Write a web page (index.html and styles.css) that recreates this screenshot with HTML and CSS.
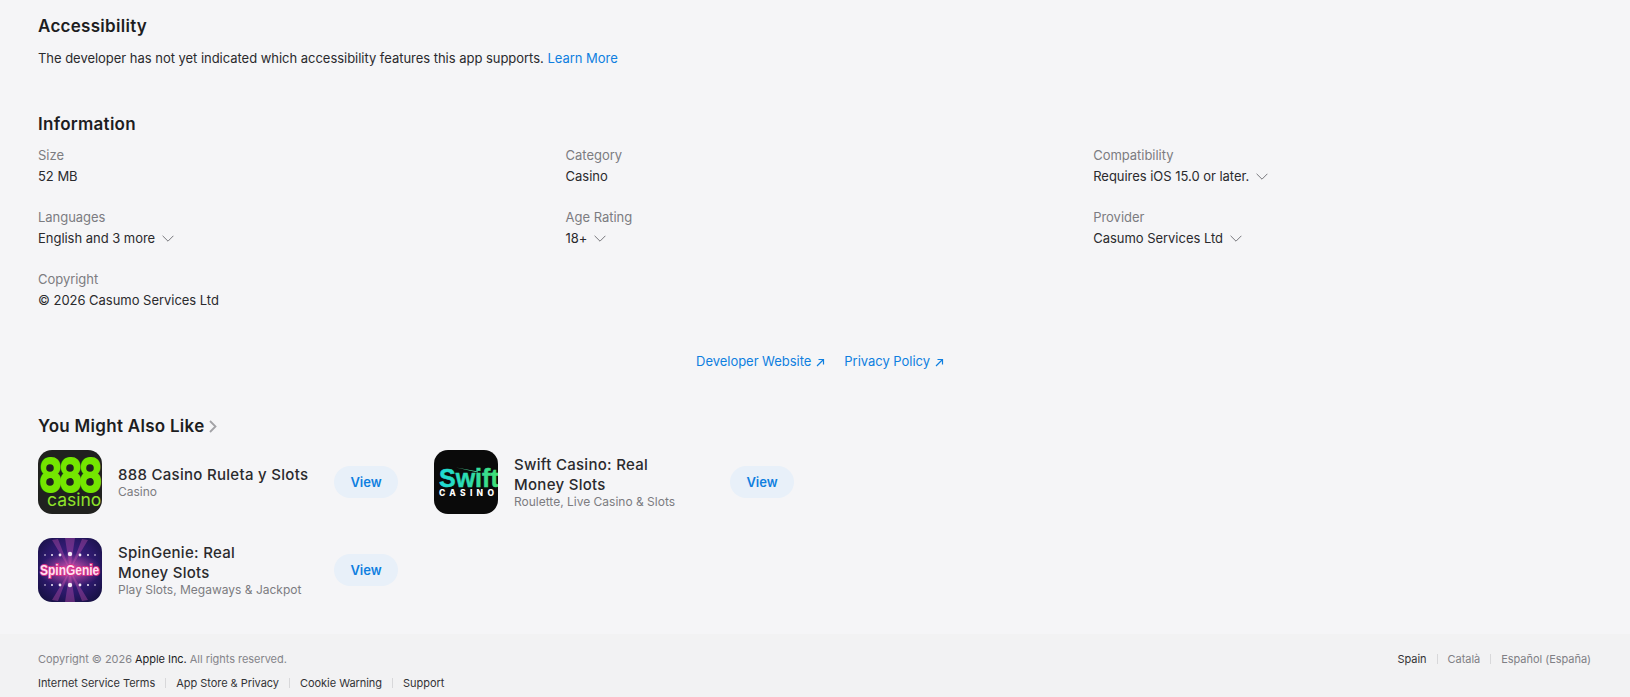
FILE: index.html
```html
<!DOCTYPE html>
<html lang="en">
<head>
<meta charset="utf-8">
<title>App details</title>
<link rel="stylesheet" href="styles.css">
</head>
<body>
<main class="main">
  <section class="access">
    <h2 class="heading">Accessibility</h2>
    <p class="para">The developer has not yet indicated which accessibility features this app supports. <a class="link" href="#">Learn More</a></p>
  </section>
  <section class="info">
    <h2 class="heading">Information</h2>
    <dl class="grid">
      <div class="cell"><dt class="label">Size</dt><dd class="value">52 MB</dd></div>
      <div class="cell"><dt class="label">Category</dt><dd class="value">Casino</dd></div>
      <div class="cell"><dt class="label">Compatibility</dt><dd class="value">Requires iOS 15.0 or later.<svg class="chev" viewBox="0 0 12 7"><path d="M.6.8 6 6.2 11.400.8"/></svg></dd></div>
      <div class="cell"><dt class="label">Languages</dt><dd class="value">English and 3 more<svg class="chev" viewBox="0 0 12 7"><path d="M.6.8 6 6.2 11.400.8"/></svg></dd></div>
      <div class="cell"><dt class="label">Age Rating</dt><dd class="value">18+<svg class="chev" viewBox="0 0 12 7"><path d="M.6.8 6 6.2 11.400.8"/></svg></dd></div>
      <div class="cell"><dt class="label">Provider</dt><dd class="value">Casumo Services Ltd<svg class="chev" viewBox="0 0 12 7"><path d="M.6.8 6 6.2 11.400.8"/></svg></dd></div>
      <div class="cell"><dt class="label">Copyright</dt><dd class="value">© 2026 Casumo Services Ltd</dd></div>
    </dl>
  </section>
  <nav class="extlinks">
    <a class="link" href="#">Developer Website<svg class="arrow" viewBox="0 0 9 9"><path d="M1 8 7.500 1.500M2.500 1.500h5v5"/></svg></a>
    <a class="link" href="#">Privacy Policy<svg class="arrow" viewBox="0 0 9 9"><path d="M1 8 7.500 1.500M2.500 1.500h5v5"/></svg></a>
  </nav>
  <section class="also">
    <h2 class="heading heading-row">You Might Also Like<svg class="more" viewBox="0 0 8 13"><path d="M1 1l5.500 5.500L1 12"/></svg></h2>
    <div class="apps">
      <article class="app">
        <svg class="icon" viewBox="0 0 64 64">
          <rect width="64" height="64" rx="14" fill="#20211f"/>
          <text class="t888" transform="translate(2.500 41) scale(1 1.280)">888</text>
          <g fill="#20211f">
            <circle cx="12" cy="18" r="3.800"/><circle cx="32" cy="18" r="3.800"/><circle cx="52" cy="18" r="3.800"/>
            <circle cx="12" cy="32" r="3.800"/><circle cx="32" cy="32" r="3.800"/><circle cx="52" cy="32" r="3.800"/>
          </g>
          <text class="tcasino" x="9" y="56">casino</text>
        </svg>
        <div class="meta"><h3 class="name">888 Casino Ruleta y Slots</h3><p class="sub">Casino</p></div>
        <a class="view" href="#">View</a>
      </article>
      <article class="app">
        <svg class="icon" viewBox="0 0 64 64">
          <defs><linearGradient id="sw" x1="0" x2="1" y1="0" y2="0"><stop offset="0" stop-color="#1fdcd8"/><stop offset=".55" stop-color="#2fdca8"/><stop offset="1" stop-color="#43e070"/></linearGradient></defs>
          <rect width="64" height="64" rx="14" fill="#0a0a0a"/>
          <text class="tswift" x="5" y="36.500" fill="url(#sw)" stroke="url(#sw)">Swift</text>
          <path d="M22 17.500 44 21.500 44 22.500z" fill="#4fe0a0"/>
          <text class="tcas" x="5" y="45.500" textLength="55">CASINO</text>
        </svg>
        <div class="meta"><h3 class="name wrap">Swift Casino: Real Money Slots</h3><p class="sub">Roulette, Live Casino &amp; Slots</p></div>
        <a class="view" href="#">View</a>
      </article>
      <article class="app">
        <svg class="icon" viewBox="0 0 64 64">
          <defs>
            <radialGradient id="sg" cx=".5" cy=".45" r=".7"><stop offset="0" stop-color="#4a2490"/><stop offset=".6" stop-color="#2a1868"/><stop offset="1" stop-color="#120f3c"/></radialGradient>
            <radialGradient id="sr" cx=".5" cy=".5" r=".5"><stop offset="0" stop-color="#ff5fb0" stop-opacity=".85"/><stop offset="1" stop-color="#d050a0" stop-opacity="0"/></radialGradient>
          </defs>
          <rect width="64" height="64" rx="14" fill="url(#sg)"/>
          <path d="M27 0h10l-5 32zM14 2l6-1 12 31zM44 1l6 1-18 30zM27 64h10l-5-32zM14 62l6 1 12-31zM44 63l6-1-18-30z" fill="#c050b0" opacity=".4"/>
          <ellipse cx="32" cy="32" rx="32" ry="17" fill="url(#sr)"/>
          <g fill="#f6ecf8"><circle cx="7" cy="17" r=".8"/><circle cx="14" cy="17" r="1"/><circle cx="22" cy="17" r="1.400"/><circle cx="32" cy="16" r="2.200"/><circle cx="42" cy="17" r="1.400"/><circle cx="50" cy="17" r="1"/><circle cx="57" cy="17" r=".8"/><circle cx="7" cy="47" r=".8"/><circle cx="14" cy="47" r="1"/><circle cx="22" cy="47" r="1.400"/><circle cx="32" cy="47" r="2.200"/><circle cx="42" cy="47" r="1.400"/><circle cx="50" cy="47" r="1"/><circle cx="57" cy="47" r=".8"/></g>
          <text class="tspin" transform="translate(2 37) scale(1 1.180)">SpinGenie</text>
        </svg>
        <div class="meta"><h3 class="name wrap">SpinGenie: Real Money Slots</h3><p class="sub">Play Slots, Megaways &amp; Jackpot</p></div>
        <a class="view" href="#">View</a>
      </article>
    </div>
  </section>
</main>
<footer class="footer">
  <div class="foot-col">
    <p class="copy">Copyright © 2026 <span class="dark">Apple Inc.</span> All rights reserved.</p>
    <ul class="foot-links">
      <li class="foot-item"><a class="foot-a" href="#">Internet Service Terms</a></li>
      <li class="foot-item"><a class="foot-a" href="#">App Store &amp; Privacy</a></li>
      <li class="foot-item"><a class="foot-a" href="#">Cookie Warning</a></li>
      <li class="foot-item"><a class="foot-a" href="#">Support</a></li>
    </ul>
  </div>
  <ul class="foot-links locale">
    <li class="foot-item"><a class="foot-a" href="#">Spain</a></li>
    <li class="foot-item"><a class="foot-a muted" href="#">Català</a></li>
    <li class="foot-item"><a class="foot-a muted" href="#">Español (España)</a></li>
  </ul>
</footer>
</body>
</html>
```

FILE: styles.css
```css
* { box-sizing: border-box; }
html, body { margin: 0; padding: 0; }
body {
  background: #f5f5f7;
  color: #2a2a2d;
  font-family: Inter, "Liberation Sans", sans-serif;
  font-size: 13px;
  line-height: 20px;
  letter-spacing: -0.03px;
  height: 697px;
  overflow: hidden;
}
h2, h3, p, dl, dd, ul { margin: 0; padding: 0; }
ul { list-style: none; }
a { text-decoration: none; color: inherit; }
.main { padding: 15px 38px 0; height: 634px; }
.heading { font-size: 17px; line-height: 22px; font-weight: 600; letter-spacing: 0.28px; color: #1d1d1f; }
.para { margin-top: 11px; }
.link { color: #0f7fe0; }
.info { margin-top: 45px; }
.grid {
  display: grid;
  grid-template-columns: repeat(3, 527.6px);
  row-gap: 21px;
  margin-top: 10px;
}
.label { color: #7c7c81; line-height: 20px; }
.value { margin-top: 1px; display: flex; align-items: center; }
.chev { width: 12px; height: 7px; margin-left: 7px; fill: none; stroke: #77777c; stroke-width: 1; }
.extlinks {
  display: flex;
  justify-content: center;
  gap: 19px;
  margin-top: 41px;
  padding-left: 10px;
}
.extlinks .link { display: inline-flex; align-items: center; }
.arrow { width: 9px; height: 9px; margin-left: 5px; margin-top: 2px; fill: none; stroke: #0f7fe0; stroke-width: 1.200; }
.also { margin-top: 44px; }
.heading-row { display: flex; align-items: center; }
.more { width: 8px; height: 13px; margin-left: 5px; fill: none; stroke: #a2a2a6; stroke-width: 1.800; }
.apps {
  display: grid;
  grid-template-columns: repeat(2, 360px);
  column-gap: 36px;
  row-gap: 24px;
  margin-top: 13px;
}
.app { display: flex; align-items: center; height: 64px; }
.icon { width: 64px; height: 64px; flex: none; display: block; }
.meta { margin-left: 16px; width: 200px; flex: none; }
.name { font-size: 15px; line-height: 20px; font-weight: 500; letter-spacing: 0.29px; white-space: nowrap; }
.wrap { width: 150px; white-space: normal; }
.sub { font-size: 12px; line-height: 14px; color: #7c7c81; letter-spacing: 0; }
.view {
  margin-left: 16px;
  width: 64px;
  height: 32px;
  flex: none;
  border-radius: 16px;
  background: #e8f0f9;
  color: #0f7fe0;
  font-weight: 600;
  font-size: 13px;
  display: flex;
  align-items: center;
  justify-content: center;
  padding-bottom: 1px;
}
.footer {
  height: 63px;
  background: #f2f2f3;
  padding: 15px 39px 0 38px;
  display: flex;
  justify-content: space-between;
  align-items: flex-start;
  font-size: 11px;
  line-height: 20px;
  letter-spacing: -0.04px;
}
.copy { color: #85858a; }
.dark { color: #1d1d1f; }
.foot-links { display: flex; margin-top: 4px; }
.locale { margin-top: 0; }
.foot-item { display: flex; align-items: center; }
.foot-item + .foot-item::before {
  content: "";
  width: 1px;
  height: 10px;
  background: #d8d8da;
  margin: 0 10px;
}
.foot-a { color: #333336; }
.muted { color: #808085; }
.t888 { font-family: "Liberation Sans", sans-serif; font-weight: 700; font-size: 36px; letter-spacing: 0; fill: #74e600; stroke: #74e600; stroke-width: 3; stroke-linejoin: round; }
.tcasino { font-family: Inter, sans-serif; font-size: 17.500px; letter-spacing: 0; fill: #8fe32a; }
.tswift { font-family: "Liberation Sans", sans-serif; font-weight: 700; font-size: 25px; letter-spacing: 0; stroke-width: .5; }
.tcas { font-family: Inter, sans-serif; font-weight: 800; font-size: 8.500px; letter-spacing: 0; fill: #fff; }
.tspin { font-family: "Liberation Sans", sans-serif; font-weight: 700; font-size: 12px; letter-spacing: 0; fill: #ffe0f0; stroke: #d8308a; stroke-width: 1.600; paint-order: stroke; }
```
